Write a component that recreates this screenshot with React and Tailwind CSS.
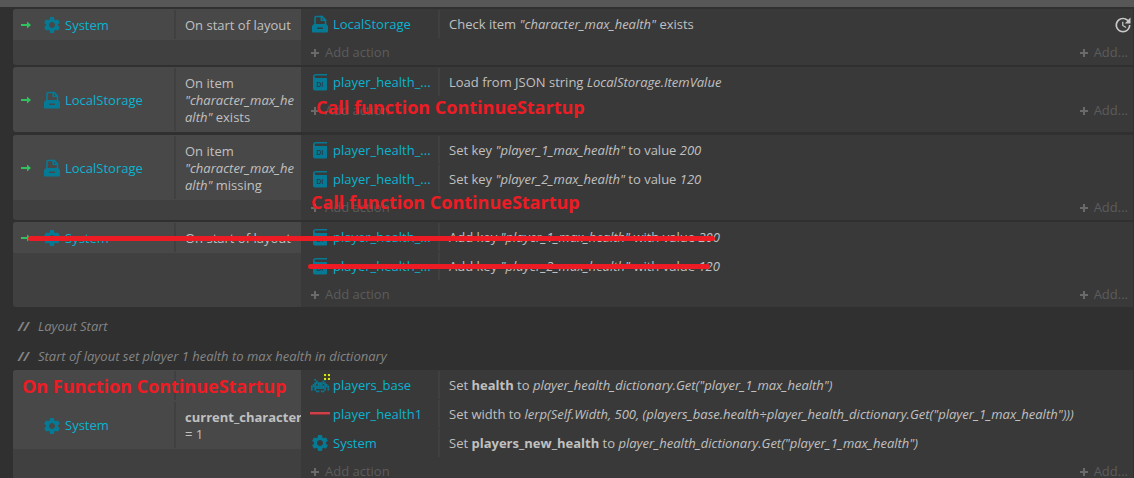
import React from 'react';
import { MdSettings, MdUpdate } from 'react-icons/md';

const StorageIcon = () => (
  <svg className="w-[18px] h-[18px] shrink-0" viewBox="0 0 18 18" fill="none">
    <path d="M4 10V2.8C4 2 4.400 1.500 5.200 1.500H11L14.500 5V10" stroke="#067a94" strokeWidth="1.600" />
    <path d="M9.500 0.800H11.300L15.200 4.700V6H9.500Z" fill="#067a94" />
    <path d="M11 3V4.500H12.500Z" fill="#393939" />
    <path
      fillRule="evenodd"
      d="M3 9H15L17 11V16C17 17 16.600 17.500 15.600 17.500H2.400C1.400 17.500 1 17 1 16V11ZM6 12.500V14H12V12.500Z"
      fill="#067a94"
    />
  </svg>
);

const DictionaryIcon = () => (
  <svg className="w-[18px] h-[18px] shrink-0" viewBox="0 0 18 18">
    <path
      d="M16 1H5C3 1 2 2 2 3.500V15.500C2 16.500 2.700 17.500 4 17.500H14.500C15.500 17.500 16 17 16 16V5H5C4 5 3.600 4.500 3.600 3.800S4 2.600 5 2.600H16Z"
      fill="#067a94"
    />
    <text x="9" y="14" textAnchor="middle" fontSize="7" fontWeight="700" fontFamily="Liberation Sans, sans-serif" fill="#24424a">
      DI
    </text>
  </svg>
);

const INVADER_ROWS = [
  '..#.....#..',
  '...#...#...',
  '..#######..',
  '.##.###.##.',
  '###########',
  '#.#######.#',
  '#.#.....#.#',
  '...##.##...',
];

const InvaderIcon = () => (
  <svg className="w-[20px] h-[18px] shrink-0 -ml-[1px] overflow-visible" viewBox="0 0 20 18">
    <g transform="translate(1 3) scale(1.65)" fill="#067a94">
      {INVADER_ROWS.map((row, y) =>
        [...row].map((cell, x) => cell === '#' && <rect key={`${x}-${y}`} x={x} y={y} width="1.04" height="1.04" />)
      )}
    </g>
    <rect x="14" y="-2" width="6" height="6" fill="#4a4d10" />
    <path d="M14 -2h2v2h-2zM18 -2h2v2h-2zM14 2h2v2h-2zM18 2h2v2h-2z" fill="#d3e61e" />
    <path d="M16 0h2v2h-2z" fill="#393939" />
  </svg>
);

const SystemIcon = () => <MdSettings className="w-[20px] h-[20px] -mx-[1px] shrink-0 text-[#067a94]" />;

const BarIcon = () => (
  <svg className="w-[20px] h-[4px] shrink-0 -ml-[1px]" viewBox="0 0 20 4">
    <rect width="20" height="2" y="0" fill="#d04048" />
    <rect width="20" height="1" y="2" fill="#8a3036" />
  </svg>
);

const PlusIcon = () => (
  <svg className="w-[10px] h-[10px]" viewBox="0 0 10 10">
    <path d="M4 1h2v3h3v2H6v3H4V6H1V4h3z" fill="#6a6a6a" />
  </svg>
);

const icons = {
  system: SystemIcon,
  storage: StorageIcon,
  dictionary: DictionaryIcon,
  invader: InvaderIcon,
  bar: BarIcon,
};

const TriggerArrow = () => (
  <svg className="w-[10px] h-[8px]" viewBox="0 0 10 8">
    <path d="M0 3h6V.6L10 4 6 7.4V5H0z" fill="#2fc25e" />
  </svg>
);

const Condition = ({ trigger, icon, name, children }) => {
  const Icon = icons[icon];
  return (
    <div className="flex bg-[#484848] py-px min-h-[31px]">
      <div className="flex items-center w-[163px] shrink-0 border-r-2 border-[#404040] pl-2 pt-px">
        <div className="w-[22px] shrink-0">{trigger && <TriggerArrow />}</div>
        {Icon && <Icon />}
        <span className="ml-1 text-[#08b4d0]">{name}</span>
      </div>
      <div className="flex-1 min-w-0 pl-[9px] pr-[6px] pt-[7px] pb-[5px] wrap-break-word">{children}</div>
    </div>
  );
};

const Action = ({ icon, name, children }) => {
  const Icon = icons[icon];
  return (
    <div className="flex h-[29px] pt-px">
      <div className="flex items-center w-[139px] shrink-0 border-r-2 border-[#404040] pl-[10px]">
        <div className="flex items-center w-[18px] shrink-0">
          <Icon />
        </div>
        <span className="ml-1 text-[#08b4d0] whitespace-nowrap">{name}</span>
      </div>
      <div className="flex items-center pl-[9px] whitespace-nowrap">
        <span>{children}</span>
      </div>
    </div>
  );
};

const EventBlock = ({ conditions, actions, className = '', children }) => (
  <div className={`relative flex mr-px mb-[2px] ${className}`}>
    <div className="w-[288px] shrink-0 rounded-l-[3px] overflow-hidden bg-[#404040]">{conditions}</div>
    <div className="flex-1 min-w-0 bg-[#393939]">
      {actions}
      <div className="flex items-center justify-between h-[27px] pt-[2px] pl-[9px] pr-[5px] text-[#5c5c5c]">
        <button type="button" className="flex items-center gap-[5px]">
          <PlusIcon />
          Add action
        </button>
        <button type="button" className="flex items-center gap-[5px]">
          <PlusIcon />
          Add...
        </button>
      </div>
    </div>
    {children}
  </div>
);

const Comment = ({ children }) => (
  <div className="flex items-center h-[30px] pt-[3px] pl-[5px] text-[#858585] italic">
    <span className="w-5 font-bold">//</span>
    <span>{children}</span>
  </div>
);

const Note = ({ className, children }) => (
  <div className={`absolute whitespace-nowrap font-bold text-[18px] leading-6 text-[#ed1c24] ${className}`}>
    {children}
  </div>
);

const Strike = ({ className }) => <div className={`absolute h-[5px] rounded-full bg-[#ed1c24] ${className}`} />;

const App = () => {
  return (
    <div className="h-screen overflow-hidden bg-[#303030] font-['Open_Sans',sans-serif] text-[13px] leading-[17px] text-[#c0c0c0]">
      <div className="h-[7px] bg-[#575757] mb-[2px]" />

      {/* Event sheet */}
      <main className="pl-[13px]">
        <EventBlock
          conditions={<Condition trigger icon="system" name="System">On start of layout</Condition>}
          actions={
            <Action icon="storage" name="LocalStorage">
              Check item <i>"character_max_health"</i> exists
            </Action>
          }
        >
          <MdUpdate className="absolute right-0 top-[6px] w-5 h-5 text-[#c8c8c8]" />
        </EventBlock>

        <EventBlock
          className="mb-[3px]"
          conditions={
            <Condition trigger icon="storage" name="LocalStorage">
              On item <i>"character_max_health"</i> exists
            </Condition>
          }
          actions={
            <Action icon="dictionary" name="player_health_...">
              Load from JSON string <i>LocalStorage.ItemValue</i>
            </Action>
          }
        >
          <Note className="left-[303px] top-[28px]">Call function ContinueStartup</Note>
        </EventBlock>

        <EventBlock
          conditions={
            <Condition trigger icon="storage" name="LocalStorage">
              On item <i>"character_max_health"</i> missing
            </Condition>
          }
          actions={
            <>
              <Action icon="dictionary" name="player_health_...">
                Set key <i>"player_1_max_health"</i> to value <i>200</i>
              </Action>
              <Action icon="dictionary" name="player_health_...">
                Set key <i>"player_2_max_health"</i> to value <i>120</i>
              </Action>
            </>
          }
        >
          <Note className="left-[298px] top-[55px]">Call function ContinueStartup</Note>
        </EventBlock>

        <EventBlock
          conditions={<Condition trigger icon="system" name="System">On start of layout</Condition>}
          actions={
            <>
              <Action icon="dictionary" name="player_health_...">
                Add key <i>"player_1_max_health"</i> with value <i>200</i>
              </Action>
              <Action icon="dictionary" name="player_health_...">
                Add key <i>"player_2_max_health"</i> with value <i>120</i>
              </Action>
            </>
          }
        >
          <Strike className="left-[15px] top-[14px] w-[687px]" />
          <Strike className="left-[295px] top-[42px] w-[402px]" />
        </EventBlock>

        <div className="pt-px">
          <Comment>Layout Start</Comment>
          <Comment>Start of layout set player 1 health to max health in dictionary</Comment>
        </div>

        <EventBlock
          conditions={
            <>
              <Condition />
              <Condition icon="system" name="System">
                <b className="whitespace-nowrap">current_character</b> = 1
              </Condition>
            </>
          }
          actions={
            <>
              <Action icon="invader" name="players_base">
                Set <b>health</b> to <i>player_health_dictionary.Get("player_1_max_health")</i>
              </Action>
              <Action icon="bar" name="player_health1">
                Set width to <i>lerp(Self.Width, 500, (players_base.health÷player_health_dictionary.Get("player_1_max_health")))</i>
              </Action>
              <Action icon="system" name="System">
                Set <b>players_new_health</b> to <i>player_health_dictionary.Get("player_1_max_health")</i>
              </Action>
            </>
          }
        >
          <Note className="left-[9px] top-[4px]">On Function ContinueStartup</Note>
        </EventBlock>
      </main>
    </div>
  );
};

export default App;
